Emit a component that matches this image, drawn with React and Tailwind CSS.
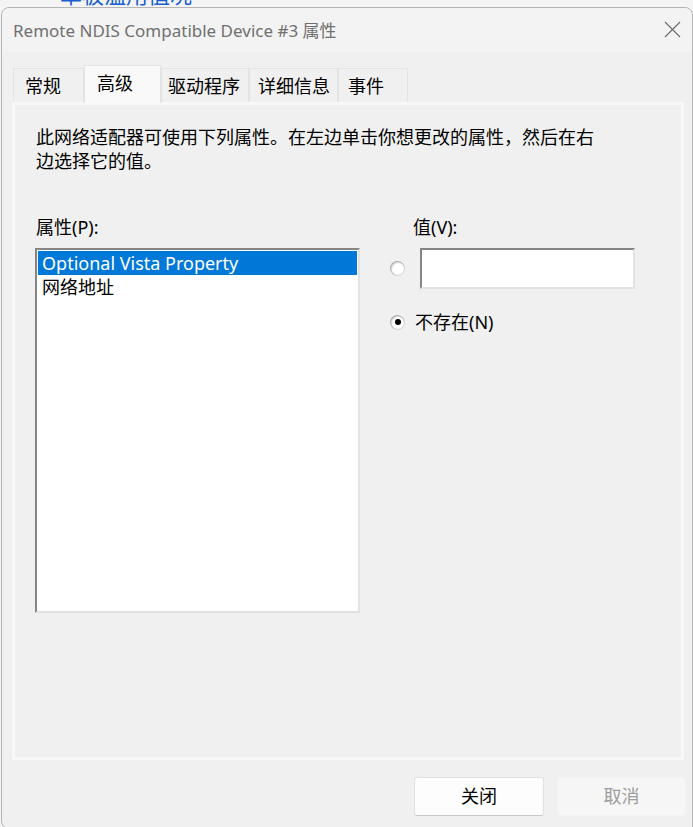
import React from "react";

const tabs = [
  { label: "常规", cls: "w-[71px] pl-[11px] h-[34px] bg-[#f0f0f0] text-black", sel: false },
  { label: "高级", cls: "w-[77px] pl-[12px] h-[38px] bg-[#f9f9f9] text-black -mb-[1px] z-10 pb-[4px]", sel: true },
  { label: "驱动程序", cls: "w-[88px] pl-[6px] h-[34px] bg-[#f0f0f0] text-black", sel: false },
  { label: "详细信息", cls: "w-[89px] pl-[8px] h-[34px] bg-[#f0f0f0] text-black", sel: false },
  { label: "事件", cls: "w-[70px] pl-[9px] h-[34px] bg-[#f0f0f0] text-black", sel: false },
];

function Radio({ checked }) {
  return (
    <div className="w-[15px] h-[15px] rounded-full bg-gradient-to-br from-[#9a9a9a] to-[#e8e8e8] p-[1px] shrink-0">
      <div className="w-full h-full rounded-full bg-white flex items-center justify-center shadow-[inset_1px_1px_1px_rgba(0,0,0,0.15)]">
        {checked && <div className="w-[6px] h-[6px] rounded-full bg-black" />}
      </div>
    </div>
  );
}

export default function App() {
  return (
    <div className="relative w-[693px] h-[827px] overflow-hidden bg-[#f4f4f4] font-['Noto_Sans','Noto_Sans_CJK_SC',sans-serif]">
      <div className="h-[7px] overflow-hidden pl-[60px]">
        <div className="-mt-[19px] text-[22px] leading-[26px] text-[#1a5fd0] whitespace-nowrap">单板温用值况</div>
      </div>
      <div className="ml-[1px] w-[692px] h-[822px] rounded-t-[8px] rounded-bl-[8px] border border-[#b4b4b4] bg-[#f0f0f0] flex flex-col">
        {/* title bar */}
        <div className="h-[44px] bg-[#f3f3f3] rounded-t-[8px] flex items-center justify-between pl-[11px] pr-[11px]">
          <span className="text-[17px] text-[#707070] whitespace-nowrap pt-[1px]">Remote NDIS Compatible Device #3 属性</span>
          <svg width="17" height="17" viewBox="0 0 17 17" className="mb-[1px]">
            <path d="M1 1 L16 16 M16 1 L1 16" stroke="#6a6a6a" strokeWidth="1.1" fill="none" />
          </svg>
        </div>
        {/* tabs */}
        <div className="h-[50px] flex items-end pl-[11px]">
          {tabs.map((t) => (
            <div
              key={t.label}
              className={`relative flex items-center border border-b-0 border-[#e3e3e3] text-[18px] leading-[24px] whitespace-nowrap ${t.cls}`}
            >
              {t.label}
            </div>
          ))}
        </div>
        {/* panel */}
        <div className="ml-[10px] mr-[8px] h-[658px] border-[3px] border-[#f8f8f8] bg-[#f0f0f0] pl-[20px] pt-[20px]">
          <div className="ml-[1px] text-[18px] leading-[24px] text-black">
            此网络适配器可使用下列属性。在左边单击你想更改的属性，然后在右
            <br />
            边选择它的值。
          </div>
          <div className="flex mt-[42px]">
            <div className="w-[325px]">
              <div className="ml-[1px] text-[18px] leading-[24px] text-black">属性(P):</div>
              <div className="mt-[9px] h-[365px] border-2 border-t-[#858585] border-l-[#858585] border-r-[#e2e2e2] border-b-[#e2e2e2] bg-white p-[1px]">
                <div className="h-[24px] bg-[#0078d7] text-white text-[18px] leading-[24px] pl-[4px] whitespace-nowrap">
                  Optional Vista Property
                </div>
                <div className="h-[24px] text-black text-[18px] leading-[24px] pl-[4px] whitespace-nowrap">网络地址</div>
              </div>
            </div>
            <div className="ml-[29px]">
              <div className="ml-[24px] text-[18px] leading-[24px] text-black">值(V):</div>
              <div className="mt-[9px] flex items-center">
                <div className="ml-[1px]"><Radio checked={false} /></div>
                <div className="ml-[15px] w-[215px] h-[41px] border-2 border-t-[#858585] border-l-[#858585] border-r-[#e2e2e2] border-b-[#e2e2e2] bg-white" />
              </div>
              <div className="mt-[21px] flex items-center h-[24px]">
                <div className="ml-[1px]"><Radio checked={true} /></div>
                <span className="ml-[10px] text-[18px] leading-[24px] text-black">不存在(N)</span>
              </div>
            </div>
          </div>
        </div>
        {/* footer */}
        <div className="flex justify-end gap-[13px] pt-[17px] pr-[6px]">
          <div className="w-[130px] h-[39px] rounded-[3px] bg-[#fdfdfd] border border-[#e0e0e0] border-b-[#c8c8c8] flex items-center justify-center text-[18px] text-black">
            关闭
          </div>
          <div className="w-[129px] h-[39px] rounded-[3px] bg-[#f6f6f6] border border-[#f2f2f2] flex items-center justify-center text-[18px] text-[#9e9e9e]">
            取消
          </div>
        </div>
      </div>
    </div>
  );
}
